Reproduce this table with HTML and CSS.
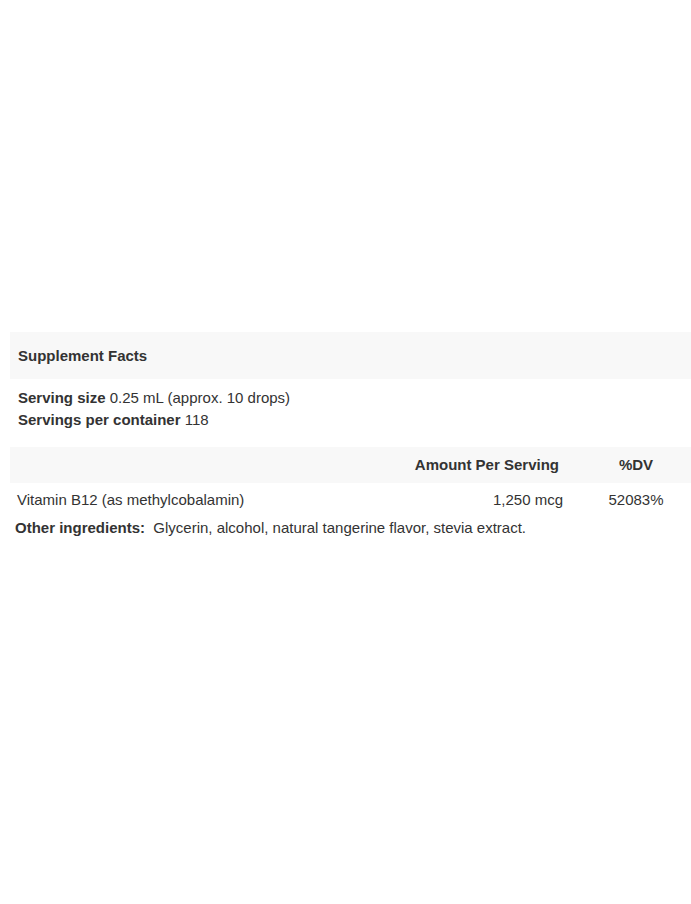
FILE: index.html
```html
<!DOCTYPE html>
<html>
<head>
<meta charset="utf-8">
<link rel="stylesheet" href="styles.css">
</head>
<body>
<div class="page">
  <section class="facts">
    <div class="facts-title">Supplement Facts</div>
    <div class="serving">
      <div><b>Serving size</b> 0.25 mL (approx. 10 drops)</div>
      <div><b>Servings per container</b> 118</div>
    </div>
    <table class="facts-table">
      <thead>
        <tr>
          <th class="col-name"></th>
          <th class="col-amount">Amount Per Serving</th>
          <th class="col-dv">%DV</th>
        </tr>
      </thead>
      <tbody>
        <tr>
          <td class="col-name">Vitamin B12 (as methylcobalamin)</td>
          <td class="col-amount">1,250 mcg</td>
          <td class="col-dv">52083%</td>
        </tr>
      </tbody>
    </table>
    <div class="other"><b>Other ingredients:</b>&nbsp; Glycerin, alcohol, natural tangerine flavor, stevia extract.</div>
  </section>
</div>
</body>
</html>
```

FILE: styles.css
```css
html, body {
  margin: 0;
  padding: 0;
  background: #fff;
}
body {
  font-family: "Liberation Sans", Arial, sans-serif;
  font-size: 15px;
  color: #333;
}
.page {
  padding-top: 332px;
  padding-left: 10px;
}
.facts-title {
  background: #f8f8f8;
  height: 47px;
  line-height: 47px;
  padding-left: 8px;
  font-weight: bold;
}
.serving {
  padding: 8px 8px 0 8px;
  line-height: 22px;
}
.facts-table {
  width: 100%;
  border-collapse: collapse;
  margin-top: 16px;
}
.facts-table th {
  background: #f8f8f8;
  height: 36px;
  padding: 0;
  font-weight: bold;
  line-height: 18px;
}
.facts-table td {
  height: 33px;
  padding: 0;
  line-height: 18px;
}
.col-name {
  text-align: left;
  padding-left: 7px !important;
}
th.col-amount {
  text-align: right;
  padding-right: 22px !important;
}
td.col-amount {
  text-align: right;
  padding-right: 18px !important;
}
.col-dv {
  width: 110px;
  text-align: center;
}
.other {
  padding-left: 5px;
  line-height: 24px;
}
```
